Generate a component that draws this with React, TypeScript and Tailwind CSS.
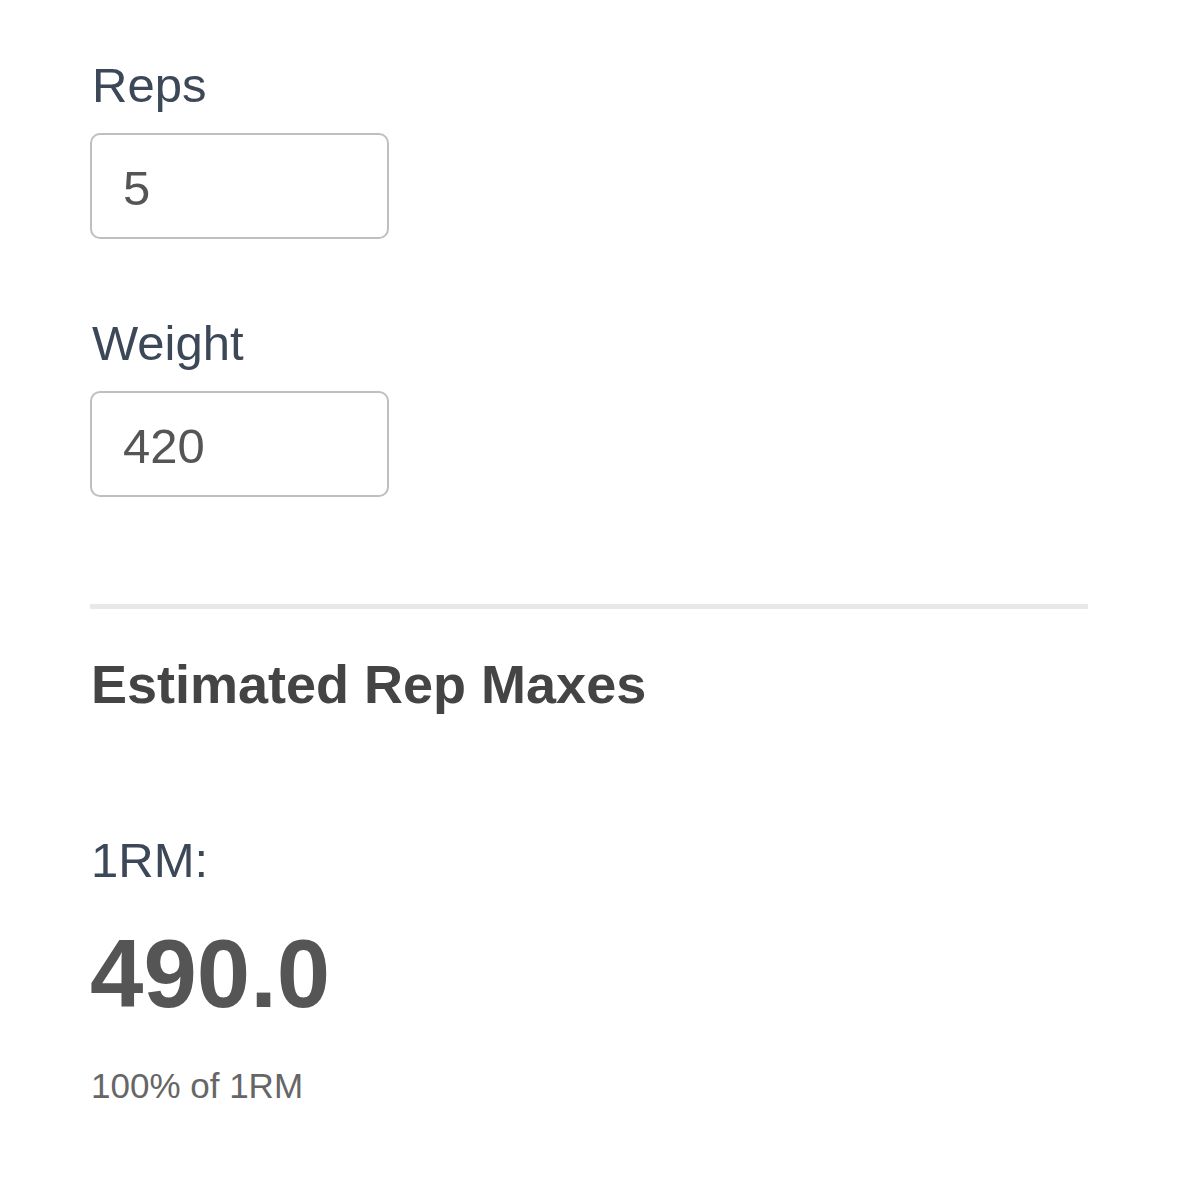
export default function App() {
  const font = { fontFamily: '"Liberation Sans", Arial, sans-serif' };
  return (
    <div className="min-h-[1185px] w-[1179px] bg-white" style={font}>
      <div className="pl-[90px] pr-[91px] pt-[57px]">
        {/* Reps */}
        <div className="pl-[2px] text-[49px] leading-[56px] text-[#3c4858]">Reps</div>
        <div className="mt-[20px] h-[106px] w-[299px] rounded-[10px] border-2 border-[#bfbfbf] pl-[31px] pt-[25px] text-[49px] leading-[56px] text-[#555555]">
          5
        </div>

        {/* Weight */}
        <div className="mt-[76px] pl-[2px] text-[49px] leading-[56px] text-[#3c4858]">Weight</div>
        <div className="mt-[20px] h-[106px] w-[299px] rounded-[10px] border-2 border-[#bfbfbf] pl-[31px] pt-[25px] text-[49px] leading-[56px] text-[#555555]">
          420
        </div>

        <div className="mt-[107px] h-[5px] w-[998px] bg-[#e8e8e8]" />

        <h2 className="mt-[44px] pl-[1px] text-[54px] font-bold leading-[62px] text-[#444444]">
          Estimated Rep Maxes
        </h2>

        <div className="mt-[117px] pl-[1px] text-[49px] leading-[56px] text-[#3c4858]">1RM:</div>
        <div className="mt-[38px] text-[96px] font-bold leading-[96px] text-[#555555]">490.0</div>
        <div className="mt-[44px] pl-[1px] text-[35px] leading-[40px] text-[#666666]">100% of 1RM</div>
      </div>
    </div>
  );
}
